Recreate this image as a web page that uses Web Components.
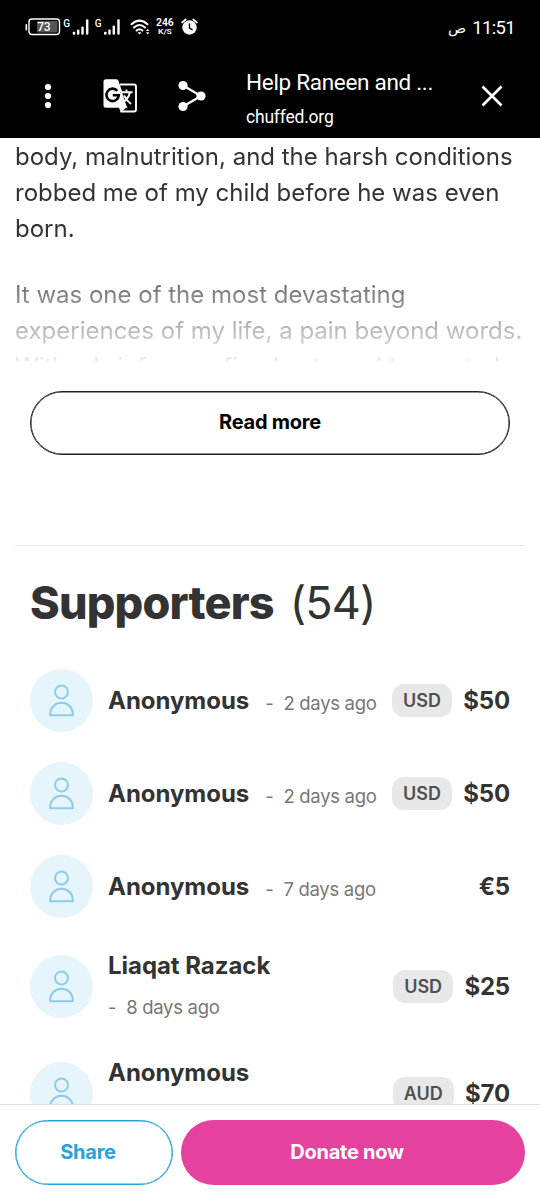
<!DOCTYPE html>
<html lang="en">
<head>
<meta charset="utf-8">
<title>Help Raneen and ...</title>
<style>
html,body{margin:0;height:100%;background:#fff;overflow:hidden;font-family:Inter,sans-serif;color:#333}
</style>
</head>
<body>
<campaign-page></campaign-page>
<script>
const define=(name,html)=>customElements.define(name,class extends HTMLElement{
  connectedCallback(){
    if(this.shadowRoot)return;
    const t=document.createElement('template');
    t.innerHTML=typeof html==='function'?html(this):html;
    this.attachShadow({mode:'open'}).append(t.content.cloneNode(true));
  }
});

define('status-bar',`<style>
:host{display:flex;height:54px;box-sizing:border-box;padding:1px 25px 0 25px;align-items:center;justify-content:space-between;background:#000;color:#fff;font-family:Roboto,sans-serif}
svg{display:block;margin-top:-1px}.time{font-size:18.500px;letter-spacing:-.65px;direction:ltr;display:flex;gap:6px;align-items:center}
.ar{font-family:"DejaVu Sans",sans-serif;font-size:15px;letter-spacing:0}
</style>
<svg width="175" height="30" viewBox="25 12 175 30" fill="#fff" font-family="Roboto,sans-serif">
<rect x="25.5" y="24" width="1.7" height="6.5" rx=".8"/>
<rect x="29" y="19" width="30.5" height="15.5" rx="3" fill="none" stroke="#fff" stroke-width="1.4"/>
<rect x="37" y="21" width="20.5" height="11.5" rx="1" fill="#555"/>
<text x="37.2" y="31" font-size="12" font-weight="500" textLength="13.5">73</text>
<text x="63.3" y="26.5" font-size="10" font-weight="500">G</text>
<g><rect x="72.700" y="31.700" width="2.600" height="3" rx="1"/><rect x="77" y="29.5" width="2.4" height="5.2" rx="1"/><rect x="81.3" y="26.5" width="2.4" height="8.2" rx="1"/><rect x="86" y="19.3" width="2.4" height="15.4" rx="1"/></g>
<text x="94.8" y="26.5" font-size="10" font-weight="500">G</text>
<g transform="translate(31.3)"><rect x="72.700" y="31.700" width="2.600" height="3" rx="1"/><rect x="77" y="29.5" width="2.4" height="5.2" rx="1"/><rect x="81.3" y="25.5" width="2.4" height="9.2" rx="1"/><rect x="86" y="19.3" width="2.4" height="15.4" rx="1"/></g>
<g fill="none" stroke="#fff" stroke-width="2" stroke-linecap="round"><path d="M131.5 24.3Q139.500 17 147.500 24.300"/><path d="M134 27.500Q139.500 22.500 145 27.500"/><path d="M136.600 30.500Q139.500 28 142.400 30.500"/></g>
<path d="M137.500 32.200h4l-2 2.400zM146 31l1.700-2.200 1.700 2.200zM146 32.200l1.700 2.300 1.700-2.300z"/>
<text x="156" y="25.500" font-size="11.500" font-weight="600" textLength="17.800" lengthAdjust="spacingAndGlyphs">246</text>
<text x="158" y="33.900" font-size="8" font-weight="600" textLength="13.800" lengthAdjust="spacingAndGlyphs">K/S</text>
<circle cx="189.500" cy="27.500" r="7.200"/><path d="M182.200 22.500l3.500-3M196.800 22.500l-3.500-3" stroke="#fff" stroke-width="1.800" stroke-linecap="round"/><path d="M189.500 23.500v4.500l3 1.800" fill="none" stroke="#000" stroke-width="1.400"/>
</svg>
<div class="time"><span class="ar" lang="ar">ص</span><span>11:51</span></div>`);

define('browser-bar',`<style>
:host{display:grid;grid-template-columns:24px 48px 24px 48px 24px 48px 1fr 96px;height:84px;background:#000;color:#fff;align-items:center}
svg{display:block;margin:auto}i{display:block;height:48px}
.page{padding-left:30px;margin-top:1px;font-family:Roboto,sans-serif;white-space:nowrap}
.t{font-size:22.500px;line-height:30px;letter-spacing:-.3px}.u{font-size:17.500px;line-height:24px;margin-top:8px;letter-spacing:-.2px;margin-bottom:-2px}
</style>
<i></i><svg width="48" height="48" fill="#fff"><circle cx="24" cy="15" r="3.100"/><circle cx="24" cy="24" r="3.100"/><circle cx="24" cy="33" r="3.100"/></svg>
<i></i><svg width="48" height="48" viewBox="96 72 48 48"><path d="M120 84.500h14a2 2 0 0 1 2 2v23a2 2 0 0 1-2 2h-12.500l-1.500-5" fill="none" stroke="#fff" stroke-width="1.900"/><path d="M106 79.200h10.500q1.500 0 2 1.500l9 27h-21.500a2.500 2.500 0 0 1-2.500-2.500v-23.500a2.500 2.500 0 0 1 2.500-2.500z" fill="#fff"/><path d="M119 107l1.800 5.500 6.200-5.500z" fill="#fff"/><path d="M117.300 90.800a6.200 6.200 0 1 0 1.500 4.500h-6" fill="none" stroke="#000" stroke-width="2.600"/><path d="M120.500 92.500h2l4.500 14" fill="none" stroke="#000" stroke-width=".7"/><path d="M121 92.200h11.500M126.500 89.500v3M130 92.200q-1.500 6.300-7 10.300M124 95.500q3 5.500 7 8.500" fill="none" stroke="#fff" stroke-width="1.900"/></svg>
<i></i><svg width="48" height="48" viewBox="168 72 48 48" fill="#fff"><path d="M183 85.500l18 10.500-18 10.500" fill="none" stroke="#fff" stroke-width="2.300"/><circle cx="183" cy="85.500" r="4.600"/><circle cx="201" cy="96" r="4.600"/><circle cx="183" cy="106.500" r="4.600"/></svg>
<div class="page"><div class="t">Help Raneen and ...</div><div class="u">chuffed.org</div></div>
<svg width="48" height="48"><path d="M14.500 14.500l19 19M33.500 14.500L14.500 33.500" stroke="#fff" stroke-width="2.600"/></svg>`);

define('story-excerpt',`<style>
:host{display:block;height:222px;padding:0 15px;overflow:hidden;font-size:24px;line-height:36px;white-space:nowrap;-webkit-mask-image:linear-gradient(#000 0 105px,transparent 235px);mask-image:linear-gradient(#000 0 105px,transparent 235px)}
p{margin:0 0 30px}span{display:block}
</style>
<p><span>body, malnutrition, and the harsh conditions</span><span>robbed me of my child before he was even</span><span>born.</span></p>
<p><span>It was one of the most devastating</span><span>experiences of my life, a pain beyond words.</span><span>With a brief warm fixed sat used to wasted</span></p>`);

define('pill-button',`<style>
:host{display:flex;box-sizing:border-box;align-items:center;justify-content:center;border-radius:33px;font-size:20px;font-weight:700;line-height:30px;letter-spacing:-.25px;padding-bottom:2px}
:host([kind=outline]){height:64px;border:1px solid #222;box-shadow:inset 0 0 0 .5px #222;color:#000}
:host([kind=share]){height:65px;width:158px;border:1px solid #27a3d9;box-shadow:inset 0 0 0 .5px #27a3d9;color:#27a3d9;padding-right:12px}
:host([kind=donate]){height:65px;flex:1;background:#e542a0;color:#fff;padding-right:12px}
</style><slot></slot>`);

define('supporter-row',e=>`<style>
:host{display:flex;align-items:center;min-height:63px}
.av{width:63px;height:63px;border-radius:50%;background:#e6f4fb;flex:none}
svg{display:block}
.who{margin-left:15px;display:flex;align-items:center;gap:16px;white-space:nowrap}
:host([stacked]) .who{flex-direction:column;align-items:flex-start;gap:5px;height:77px}
.n{font-size:24px;font-weight:700;line-height:36px;letter-spacing:-.04px}.d{font-size:18.500px;line-height:36px;color:#777;letter-spacing:-.3px;position:relative;top:2px}
:host([stacked]) .d{top:0}
.d b{font-weight:400;margin-right:10px}
.m{margin-left:auto;display:flex;align-items:center;gap:11.500px}
.c{font-size:18px;font-weight:600;line-height:33px;padding:0 10.800px;border-radius:12px;background:#e8e8e8;color:#505050}
.a{font-size:24px;font-weight:700;line-height:36px;letter-spacing:-.2px}
</style>
<div class="av"><svg width="63" height="63" fill="none" stroke="#8ecbea" stroke-width="2"><circle cx="31.500" cy="23" r="6.500"/><path d="M20.200 46.300v-1.500c0-6.300 5-11 11.300-11s11.300 4.700 11.300 11v1.500z" stroke-linejoin="round"/></svg></div>
<div class="who"><span class="n">${e.getAttribute('name')}</span><span class="d"><b>-</b>${e.getAttribute('when')}</span></div>
<div class="m">${e.hasAttribute('currency')?`<span class="c">${e.getAttribute('currency')}</span>`:''}<span class="a">${e.getAttribute('amount')}</span></div>`);

define('supporter-list',`<style>
:host{display:block;margin:90px 15px 0;padding:0 15px;border-top:1.500px solid #e8e8e8}
h2{margin:27px 0 0;font-size:45px;line-height:60px;font-weight:800;letter-spacing:-.8px;display:flex;gap:16px}
h2 span{font-weight:400;letter-spacing:-.9px}.rows{display:flex;flex-direction:column;gap:30px;margin-top:36px}
</style><h2>Supporters <span>(54)</span></h2><div class="rows"><slot></slot></div>`);

define('action-bar',`<style>
:host{display:flex;gap:8px;box-sizing:border-box;height:96px;padding:15px 15px 0;border-top:1px solid #e2e2e2;background:#fff;flex:none}
</style><pill-button kind="share">Share</pill-button><pill-button kind="donate">Donate now</pill-button>`);

define('campaign-page',`<style>
:host{display:flex;flex-direction:column;height:1200px;width:540px}
main{flex:1;min-height:0;overflow:hidden;padding-top:1px}
.more{margin:30px 30px 0}
</style>
<status-bar></status-bar><browser-bar></browser-bar>
<main><story-excerpt></story-excerpt><pill-button class="more" kind="outline">Read more</pill-button>
<supporter-list>
<supporter-row name="Anonymous" when="2 days ago" currency="USD" amount="$50"></supporter-row>
<supporter-row name="Anonymous" when="2 days ago" currency="USD" amount="$50"></supporter-row>
<supporter-row name="Anonymous" when="7 days ago" amount="€5"></supporter-row>
<supporter-row stacked name="Liaqat Razack" when="8 days ago" currency="USD" amount="$25"></supporter-row>
<supporter-row stacked name="Anonymous" when="8 days ago" currency="AUD" amount="$70"></supporter-row>
</supporter-list></main>
<action-bar></action-bar>`);
</script>
</body>
</html>
